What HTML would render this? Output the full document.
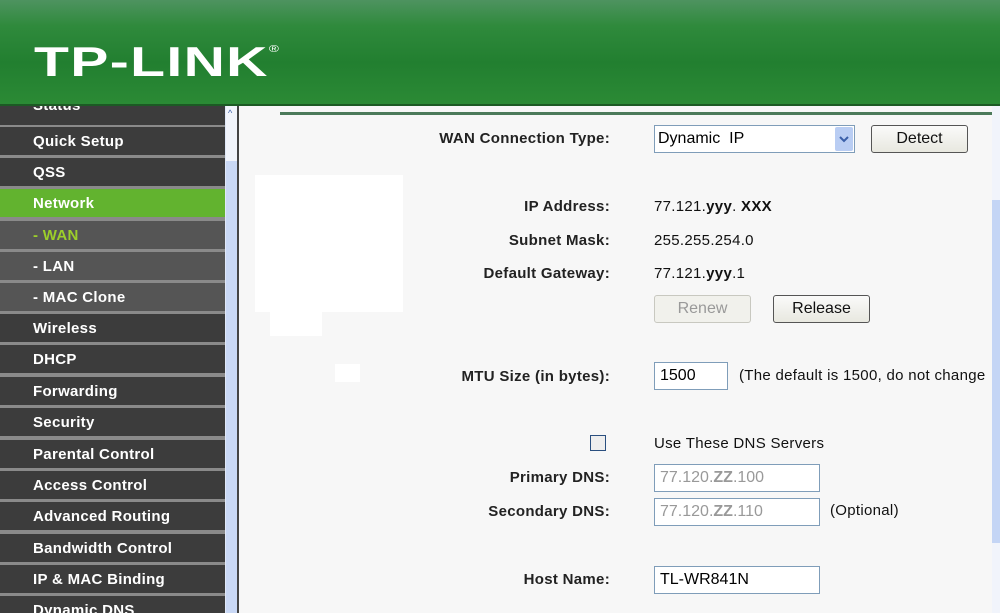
<!DOCTYPE html>
<html><head><meta charset="utf-8"><style>
*{margin:0;padding:0;box-sizing:border-box}
body{width:1000px;height:613px;overflow:hidden;background:#f7f7f7;font-family:"Liberation Sans",Arial,sans-serif;position:relative}
#hdr{position:absolute;left:0;top:0;width:1000px;height:106px;background:linear-gradient(#4e9360 0%,#2f8a3c 25%,#227f30 60%,#2b8a35 100%);border-bottom:2px solid #1c5a24}
#logo{position:absolute;left:34px;top:38px;color:#fff;font:bold 42px "Liberation Sans",sans-serif;letter-spacing:1px;transform:scaleX(1.36);transform-origin:left;white-space:nowrap}
#side{position:absolute;left:0;top:106px;width:225px;height:507px;background:#8a8a8a;overflow:hidden}
.it{position:absolute;left:0;width:225px;height:28px;background:#3c3c3c;color:#fff;font:bold 15px "Liberation Sans",sans-serif;padding-left:33px;line-height:30px;letter-spacing:.3px}
.sub{background:#555}
.net{background:#62b32f}
#sb1{position:absolute;left:225px;top:106px;width:12px;height:507px;background:#c9d8f5;border-left:1px solid #e0e8f8}
#sb1 .tr{position:absolute;top:0;left:0;width:12px;height:55px;background:#f1f4fb}
#div{position:absolute;left:237px;top:106px;width:2px;height:507px;background:#444}
.l{position:absolute;font:bold 15px "Liberation Sans",sans-serif;color:#222;text-align:right;right:390px;letter-spacing:.3px}
.v{position:absolute;left:654px;font:15px "Liberation Sans",sans-serif;color:#111;letter-spacing:.3px}
.box{position:absolute;background:#fff;border:1px solid #7f9db9;font:16px "Liberation Sans",sans-serif;padding-left:5px;line-height:26px}
.btn{position:absolute;border:1px solid #555;border-radius:3px;background:linear-gradient(#fafafa,#e8e8e0);font:16px "Liberation Sans",sans-serif;text-align:center;line-height:26px;color:#111}
</style></head><body>
<div id="hdr"><div id="logo">TP-LINK<sup style="font-size:10px;vertical-align:24px;font-weight:normal">®</sup></div></div>
<div id="side">
<div class="it" style="top:-9px;line-height:18px">Status</div>
<div class="it" style="top:21px">Quick Setup</div>
<div class="it" style="top:52px">QSS</div>
<div class="it net" style="top:83px">Network</div>
<div class="it sub" style="top:115px;color:#9ccf2a">- WAN</div>
<div class="it sub" style="top:146px">- LAN</div>
<div class="it sub" style="top:177px">- MAC Clone</div>
<div class="it" style="top:208px">Wireless</div>
<div class="it" style="top:239px">DHCP</div>
<div class="it" style="top:271px">Forwarding</div>
<div class="it" style="top:302px">Security</div>
<div class="it" style="top:334px">Parental Control</div>
<div class="it" style="top:365px">Access Control</div>
<div class="it" style="top:396px">Advanced Routing</div>
<div class="it" style="top:428px">Bandwidth Control</div>
<div class="it" style="top:459px">IP &amp; MAC Binding</div>
<div class="it" style="top:490px">Dynamic DNS</div>
</div>
<div id="sb1"><div class="tr"></div><div style="position:absolute;top:2px;left:2px;font-size:9px;color:#3b5ea8">^</div></div>
<div id="div"></div>
<div style="position:absolute;left:280px;top:112px;width:712px;height:3px;background:#4c7a5a"></div>
<div style="position:absolute;left:992px;top:106px;width:8px;height:507px;background:#f1f4fb"></div>
<div style="position:absolute;left:992px;top:200px;width:8px;height:343px;background:#c4d5f5"></div>
<div style="position:absolute;left:255px;top:175px;width:148px;height:137px;background:#fff"></div>
<div style="position:absolute;left:270px;top:312px;width:52px;height:24px;background:#fff"></div>
<div style="position:absolute;left:335px;top:364px;width:25px;height:18px;background:#fff"></div>

<div class="l" style="top:130px">WAN Connection Type:</div>
<div class="box" style="left:654px;top:125px;width:201px;height:28px;padding-left:3px">Dynamic&nbsp; IP
<div style="position:absolute;right:1px;top:1px;width:18px;height:24px;background:#b9cdf3;border-radius:2px">
<svg width="18" height="24" viewBox="0 0 18 24"><path d="M5 10 L9 14 L13 10" fill="none" stroke="#3a5fa8" stroke-width="2"/></svg></div></div>
<div class="btn" style="left:871px;top:125px;width:97px;height:28px">Detect</div>

<div class="l" style="top:198px">IP Address:</div>
<div class="v" style="top:198px">77.121.<b>yyy</b>. <b>XXX</b></div>
<div class="l" style="top:232px">Subnet Mask:</div>
<div class="v" style="top:232px">255.255.254.0</div>
<div class="l" style="top:265px">Default Gateway:</div>
<div class="v" style="top:265px">77.121.<b>yyy</b>.1</div>
<div class="btn" style="left:654px;top:295px;width:97px;height:28px;border-color:#c8c8c0;color:#999;background:#f1f1ec">Renew</div>
<div class="btn" style="left:773px;top:295px;width:97px;height:28px">Release</div>

<div class="l" style="top:368px">MTU Size (in bytes):</div>
<div class="box" style="left:654px;top:362px;width:74px;height:28px">1500</div>
<div class="v" style="top:367px;left:739px">(The default is 1500, do not change</div>

<div style="position:absolute;left:590px;top:435px;width:16px;height:16px;border:1px solid #2a4f7f;background:#eee"></div>
<div class="v" style="top:435px">Use These DNS Servers</div>
<div class="l" style="top:469px">Primary DNS:</div>
<div class="box" style="left:654px;top:464px;width:166px;height:28px;color:#999">77.120.<b>ZZ</b>.100</div>
<div class="l" style="top:503px">Secondary DNS:</div>
<div class="box" style="left:654px;top:498px;width:166px;height:28px;color:#999">77.120.<b>ZZ</b>.110</div>
<div class="v" style="top:502px;left:830px">(Optional)</div>
<div class="l" style="top:571px">Host Name:</div>
<div class="box" style="left:654px;top:566px;width:166px;height:28px">TL-WR841N</div>
</body></html>
